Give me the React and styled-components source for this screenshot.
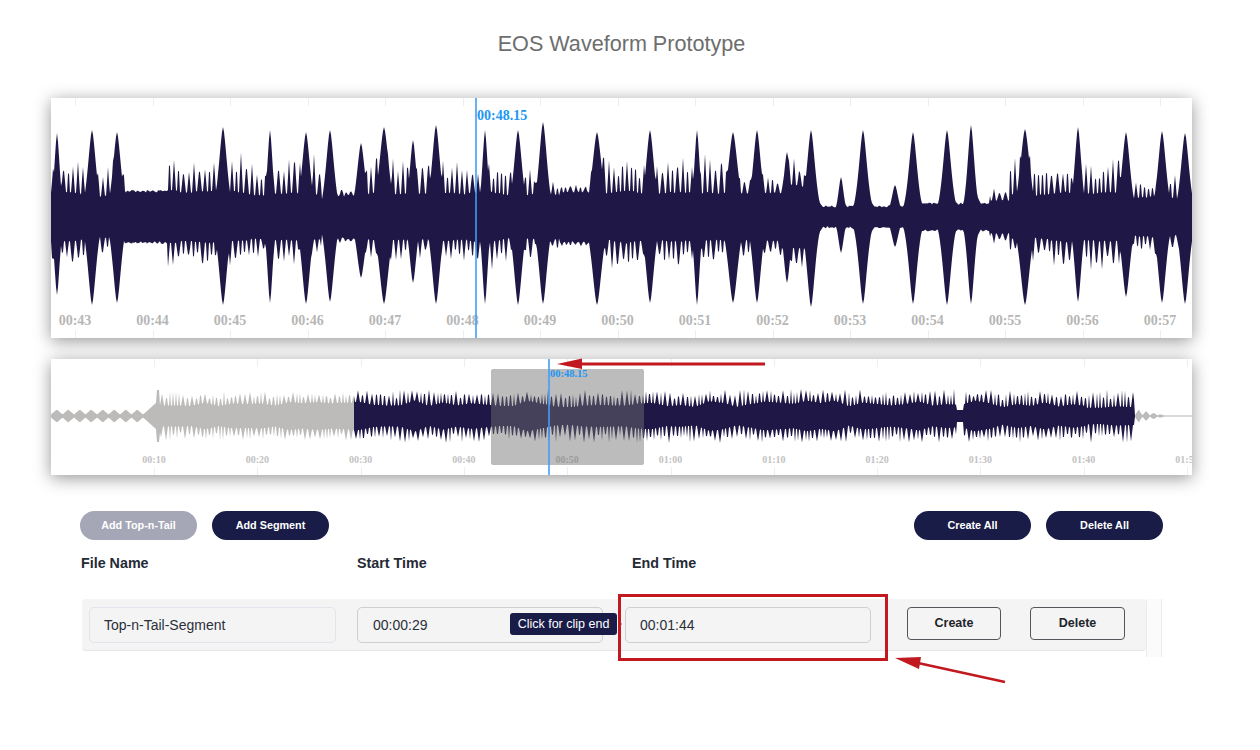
import React from "react";
import styled, { createGlobalStyle } from "styled-components";

const GlobalStyle = createGlobalStyle`
  body {
    margin: 0;
    background: #fff;
    font-family: "Liberation Sans", Arial, sans-serif;
  }
`;

const NAVY = "#1f1846";
const GREY = "#bdbbba";

// seeded so the wave looks the same on every load
function makeRandom(seed) {
  let a = seed;
  return () => {
    a = (a + 0x6d2b79f5) | 0;
    let t = Math.imul(a ^ (a >>> 15), 1 | a);
    t = (t + Math.imul(t ^ (t >>> 7), 61 | t)) ^ t;
    return ((t ^ (t >>> 14)) >>> 0) / 4294967296;
  };
}

// thin teeth of random height, one value per pixel, 0 to 1
function comb(rand, length, minHeight, minPeriod) {
  const teeth = [];
  while (teeth.length < length) {
    const period = minPeriod + Math.floor(rand() * 3);
    const height = minHeight + (1 - minHeight) * rand();
    const mid = (period - 1) / 2;
    for (let i = 0; i < period; i += 1) {
      teeth.push(height * (1 - (Math.abs(i - mid) / mid) * 0.95));
    }
  }
  return teeth;
}

// slow drift between random points, 0 to 1
function drift(rand, length, span) {
  const values = [];
  let from = rand();
  while (values.length < length) {
    const to = rand();
    for (let i = 0; i < span; i += 1) {
      values.push(from + ((to - from) * i) / span);
    }
    from = to;
  }
  return values;
}

// [from, to, solid amplitude, spike amplitude]
const MAIN_ZONES = [
  [51, 125, 19, 44],
  [125, 168, 25, 3],
  [168, 222, 21, 50],
  [222, 322, 20, 46],
  [322, 330, 15, 6],
  [330, 345, 20, 14],
  [345, 360, 22, 6],
  [360, 476, 21, 50],
  [476, 535, 20, 46],
  [535, 560, 20, 22],
  [560, 590, 24, 12],
  [590, 730, 20, 52],
  [730, 785, 21, 32],
  [785, 810, 28, 38],
  [810, 905, 10, 2],
  [905, 990, 13, 2],
  [990, 1010, 15, 16],
  [1010, 1125, 19, 48],
  [1125, 1192, 17, 32],
];

// [x, top amplitude, bottom amplitude, width]
const MAIN_PEAKS = [
  [57, 84, 78, 4], [92, 87, 88, 6], [117, 85, 86, 6],
  [223, 90, 88, 6], [270, 87, 86, 4], [306, 85, 87, 6], [330, 87, 85, 6],
  [361, 74, 61, 6], [384, 90, 87, 7], [413, 77, 66, 5], [436, 92, 87, 6],
  [485, 87, 87, 4], [518, 87, 88, 6], [543, 95, 87, 6],
  [597, 85, 88, 7], [650, 87, 86, 6], [697, 87, 88, 4], [733, 85, 86, 7], [757, 87, 86, 6],
  [787, 65, 66, 5], [811, 87, 90, 6], [841, 40, 36, 4], [863, 87, 87, 6], [895, 32, 30, 5],
  [913, 85, 87, 6], [947, 87, 88, 6], [971, 92, 87, 5],
  [1025, 88, 88, 7], [1078, 90, 85, 5], [1126, 85, 80, 6], [1162, 86, 86, 6], [1185, 84, 87, 6],
];

function mainAmps() {
  const rand = makeRandom(11);
  const upper = comb(rand, 1142, 0.55, 4);
  const lower = comb(rand, 1142, 0.55, 4);
  const slow = drift(rand, 1142, 17);
  const slower = drift(rand, 1142, 23);
  const top = [];
  const bottom = [];
  for (let x = 51; x <= 1192; x += 1) {
    const i = x - 51;
    const zone = MAIN_ZONES.find((z) => x >= z[0] && x < z[1]) || MAIN_ZONES[0];
    const jitter = (rand() - 0.5) * 1.5;
    const solid = zone[2] + zone[3] * 0.1 * slower[i];
    let t = solid + zone[3] * (0.6 + 0.4 * slow[i]) * upper[i] + jitter;
    let b = solid + zone[3] * 0.72 * (0.6 + 0.4 * slower[i]) * lower[i] + jitter;
    MAIN_PEAKS.forEach(([px, at, ab, w]) => {
      const d = Math.abs(x - px);
      const core = Math.exp(-Math.pow(d / w, 1.6));
      // sharp attack, slower decay behind each hit
      const tail = 0.5 * Math.exp(-d / (x > px ? 8 : 3));
      const bump = Math.max(core, tail);
      t = Math.max(t, at * bump);
      b = Math.max(b, ab * bump);
    });
    top.push(t);
    bottom.push(b);
  }
  return { top, bottom };
}

// diamond shaped lobes for the quiet head and tail of the clip
const lobe = (x, period) => {
  const phase = (x / period) % 1;
  return 1 - Math.abs(phase - 0.5) * 2;
};

function overviewAmps() {
  const rand = makeRandom(29);
  const upper = comb(rand, 1142, 0.6, 3);
  const lower = comb(rand, 1142, 0.6, 3);
  const slow = drift(rand, 1142, 14);
  const top = [];
  const bottom = [];
  for (let x = 51; x <= 1192; x += 1) {
    const i = x - 51;
    let t;
    let b;
    if (x < 147) {
      t = 1.5 + 5 * lobe(x - 51, 11.5);
      b = t;
    } else if (x < 157) {
      t = 5 + (x - 147) * 0.9;
      b = t;
    } else if (x < 160) {
      t = 26;
      b = 26;
    } else if (x < 1135) {
      let solid = 8 + 7 * slow[i];
      let spike = 27 - solid;
      if (x < 354) {
        solid = 8 + 6 * slow[i];
        spike = 25 - solid;
      } else if (x >= 957 && x < 964) {
        solid = 6;
        spike = 0;
      } else if (x > 1085) {
        solid = 7 + 3 * slow[i];
        spike = 27 - solid;
      }
      t = solid + spike * upper[i];
      b = solid + spike * lower[i];
    } else if (x < 1165) {
      t = 0.6 + ((1165 - x) / 30) * 7 * lobe(x - 1135, 7.5);
      b = t;
    } else {
      t = 0.4;
      b = 0.4;
    }
    top.push(t);
    bottom.push(b);
  }
  return { top, bottom };
}

// closed outline between two page x values, in panel coordinates
function wavePath({ top, bottom }, from, to, cy) {
  const up = [];
  const down = [];
  for (let x = from; x <= to; x += 1) {
    const i = x - 51;
    up.push(`${x - 51},${(cy - top[i]).toFixed(1)}`);
    down.unshift(`${x - 51},${(cy + bottom[i]).toFixed(1)}`);
  }
  return `M${up.join("L")}L${down.join("L")}Z`;
}

const Page = styled.div`
  position: relative;
  width: 1260px;
  height: 750px;
  box-sizing: border-box;
  padding: 32px 68px 0 51px;
  overflow: hidden;
`;

const Title = styled.h1`
  margin: 0 0 42px;
  font-size: 21.6px;
  line-height: 24px;
  font-weight: 400;
  text-align: center;
  color: #6e6e6e;
`;

const WavePanel = styled.div`
  position: relative;
  height: ${(p) => p.$height}px;
  margin-bottom: 21px;
  background: #fff;
  overflow: hidden;
  box-shadow: 0 3px 16px rgba(0, 0, 0, 0.42);
`;

const Svg = styled.svg`
  display: block;
  position: absolute;
  left: 0;
  top: 0;
`;

const Tick = styled.span`
  position: absolute;
  width: 1px;
  height: 8px;
  background: #eeeeee;
  ${(p) => (p.$bottom ? "bottom: 0;" : "top: 0;")}
`;

const TimeLabel = styled.span`
  position: absolute;
  bottom: 10px;
  transform: translateX(-50%);
  font-family: "Liberation Serif", "Times New Roman", serif;
  font-weight: 700;
  font-size: ${(p) => p.$size}px;
  line-height: 1;
  color: ${(p) => p.$color};
  white-space: nowrap;
`;

const Playhead = styled.div`
  position: absolute;
  top: 0;
  bottom: 0;
  width: 2px;
  background: rgba(64, 158, 245, 0.8);
`;

const PlayTime = styled.span`
  position: absolute;
  top: ${(p) => p.$top}px;
  font-family: "Liberation Serif", "Times New Roman", serif;
  font-weight: 700;
  font-size: ${(p) => p.$size}px;
  line-height: 1;
  color: #2196f3;
`;

const Selection = styled.div`
  position: absolute;
  left: 440px;
  top: 10px;
  width: 153px;
  height: 96px;
  border-radius: 2px;
  background: rgba(113, 113, 113, 0.47);
`;

const Controls = styled.section`
  padding: 15px 29px 0;
`;

const ButtonBar = styled.div`
  display: flex;
  justify-content: space-between;
`;

const ButtonGroup = styled.div`
  display: flex;
  gap: 15px;
`;

const PillButton = styled.button`
  width: 117px;
  height: 29px;
  padding: 0 0 2px;
  border: 0;
  border-radius: 15px;
  background: ${(p) => (p.$muted ? "#a5a6b6" : "#1a1c48")};
  color: #fff;
  font-family: inherit;
  font-size: 10.8px;
  font-weight: 700;
`;

const ColumnHeads = styled.div`
  display: flex;
  margin: 15px 0 27px 1px;
`;

const ColumnHead = styled.div`
  width: ${(p) => p.$width}px;
  font-size: 14.3px;
  line-height: 17px;
  font-weight: 700;
  color: #252a35;
`;

const RowWrap = styled.div`
  display: flex;
  align-items: flex-start;
  margin-left: 2px;
`;

const SegmentRow = styled.div`
  display: flex;
  align-items: flex-start;
  box-sizing: border-box;
  width: 1064px;
  height: 52px;
  padding: 8px 6px 0 7px;
  background: #f4f4f4;
  border-radius: 4px;
  border-bottom: 1px solid #e6e6e6;
`;

const RowEnd = styled.div`
  box-sizing: border-box;
  width: 16px;
  height: 58px;
  background: #fbfbfb;
  border-left: 1px solid #ececec;
  border-right: 1px solid #ececec;
`;

const Field = styled.div`
  position: relative;
  box-sizing: border-box;
  width: ${(p) => p.$width}px;
  height: 36px;
  margin-left: ${(p) => p.$gap || 0}px;
  padding-left: ${(p) => p.$inset}px;
  border: 1px solid ${(p) => p.$border};
  border-radius: 5px;
  background: #f4f4f4;
  font-size: 14px;
  line-height: 34px;
  color: #2b2f3a;
`;

const Tooltip = styled.div`
  position: absolute;
  left: 152px;
  top: 5px;
  width: 107px;
  height: 22px;
  border-radius: 3px;
  background: #1a1c48;
  color: #fff;
  font-size: 12.5px;
  line-height: 22px;
  text-align: center;

  &::after {
    content: "";
    position: absolute;
    left: 100%;
    top: 9px;
    margin-left: 2px;
    border: 2px solid transparent;
    border-left: 3px solid #1a1c48;
  }
`;

const RowButton = styled.button`
  box-sizing: border-box;
  width: ${(p) => p.$width}px;
  height: 33px;
  margin-left: ${(p) => p.$gap}px;
  padding: 0 0 2px;
  border: 1px solid #55565c;
  border-radius: 4px;
  background: #f4f4f4;
  color: #22242c;
  font-family: inherit;
  font-size: 12.5px;
  font-weight: 700;
`;

const Callout = styled.div`
  position: absolute;
  left: 618px;
  top: 594px;
  box-sizing: border-box;
  width: 270px;
  height: 67px;
  border: 3px solid #c1191f;
`;

const mainWave = mainAmps();
const overviewWave = overviewAmps();
const mainSeconds = Array.from({ length: 15 }, (_, i) => 43 + i);
const overviewSeconds = Array.from({ length: 11 }, (_, i) => 10 + i * 10);

const stamp = (s) =>
  `${String(Math.floor(s / 60)).padStart(2, "0")}:${String(s % 60).padStart(2, "0")}`;

function Axis({ seconds, start, step, size, color }) {
  return seconds.map((s, i) => {
    const left = start + i * step;
    return (
      <React.Fragment key={s}>
        <Tick style={{ left }} />
        <Tick $bottom style={{ left }} />
        <TimeLabel $size={size} $color={color} style={{ left }}>
          {stamp(s)}
        </TimeLabel>
      </React.Fragment>
    );
  });
}

export default function App() {
  return (
    <Page>
      <GlobalStyle />
      <Title>EOS Waveform Prototype</Title>

      <WavePanel $height={240}>
        <Svg width="1141" height="240" viewBox="0 0 1141 240">
          <path d={wavePath(mainWave, 51, 1192, 119)} fill={NAVY} />
        </Svg>
        <Axis seconds={mainSeconds} start={24} step={77.5} size={14} color="#b6b6b6" />
        <Playhead style={{ left: 424 }} />
        <PlayTime $top={11} $size={14} style={{ left: 426 }}>00:48.15</PlayTime>
      </WavePanel>

      <WavePanel $height={116}>
        <Svg width="1141" height="116" viewBox="0 0 1141 116">
          <line x1="0" y1="57" x2="1141" y2="57" stroke="#eeeeee" />
          <path d={wavePath(overviewWave, 51, 354, 57)} fill={GREY} />
          <path d={wavePath(overviewWave, 354, 1135, 57)} fill={NAVY} />
          <path d={wavePath(overviewWave, 1135, 1192, 57)} fill={GREY} />
        </Svg>
        <Axis seconds={overviewSeconds} start={103} step={103.3} size={10} color="#c2c2c2" />
        <Selection />
        <Playhead style={{ left: 497 }} />
        <PlayTime $top={10} $size={10.5} style={{ left: 499 }}>00:48.15</PlayTime>
      </WavePanel>

      <Controls>
        <ButtonBar>
          <ButtonGroup>
            <PillButton $muted>Add Top-n-Tail</PillButton>
            <PillButton>Add Segment</PillButton>
          </ButtonGroup>
          <ButtonGroup>
            <PillButton>Create All</PillButton>
            <PillButton>Delete All</PillButton>
          </ButtonGroup>
        </ButtonBar>

        <ColumnHeads>
          <ColumnHead $width={276}>File Name</ColumnHead>
          <ColumnHead $width={275}>Start Time</ColumnHead>
          <ColumnHead $width={200}>End Time</ColumnHead>
        </ColumnHeads>

        <RowWrap>
          <SegmentRow>
            <Field $width={247} $inset={14} $border="#e1e4ea">Top-n-Tail-Segment</Field>
            <Field $width={246} $gap={21} $inset={15} $border="#cfcfcf">
              00:00:29
              <Tooltip>Click for clip end</Tooltip>
            </Field>
            <Field $width={246} $gap={22} $inset={14} $border="#cfcfcf">00:01:44</Field>
            <RowButton $width={94} $gap={36}>Create</RowButton>
            <RowButton $width={95} $gap={29}>Delete</RowButton>
          </SegmentRow>
          <RowEnd />
        </RowWrap>
      </Controls>

      <Callout />
      <Svg width="1260" height="750" viewBox="0 0 1260 750">
        <line x1="765" y1="364" x2="580" y2="364" stroke="#c1191f" strokeWidth="3" />
        <polygon points="557,364 582,358.5 582,369" fill="#c1191f" />
        <line x1="1005" y1="682" x2="918" y2="663" stroke="#c1191f" strokeWidth="2.5" />
        <polygon points="895,658 921,657 919,669" fill="#c1191f" />
      </Svg>
    </Page>
  );
}
